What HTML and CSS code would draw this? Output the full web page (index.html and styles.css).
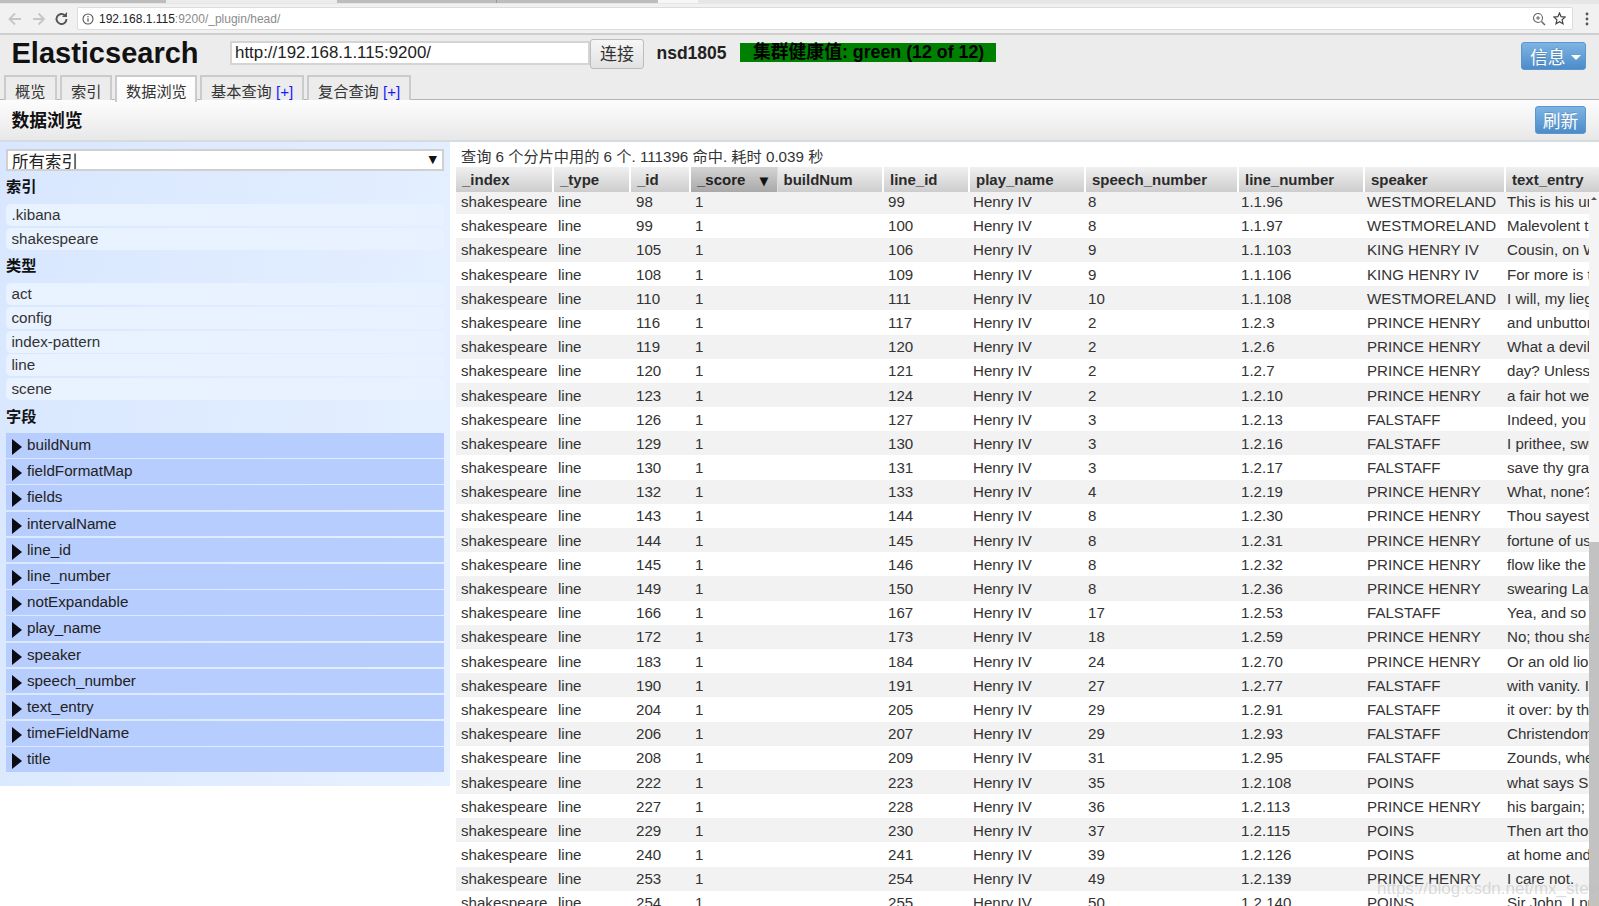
FILE: index.html
```html
<!DOCTYPE html>
<html lang="zh">
<head>
<meta charset="utf-8">
<title>Elasticsearch</title>
<link rel="stylesheet" href="styles.css">
</head>
<body>
<div class="chrome">
  <div class="strip">
    <span class="st st-a"></span><span class="st st-b"></span><span class="st st-c"></span><span class="st st-c st-d"></span><span class="st st-e"></span>
  </div>
  <div class="toolbar">
    <svg class="nav" width="72" height="20" viewBox="0 0 72 20">
      <path d="M20 10H9M14 4.5L8.5 10l5.5 5.5" fill="none" stroke="#c6c6c6" stroke-width="1.8"/>
      <path d="M32 10h11M37.500 4.500L43 10l-5.500 5.500" fill="none" stroke="#c6c6c6" stroke-width="1.800"/>
      <path d="M65.500 10a5 5 0 1 1-1.500-3.600" fill="none" stroke="#555" stroke-width="1.900"/>
      <path d="M66 3v5h-5z" fill="#555"/>
    </svg>
    <div class="address">
      <svg class="addr-i" width="12" height="12" viewBox="0 0 12 12"><circle cx="6" cy="6" r="5" fill="none" stroke="#555" stroke-width="1.100"/><path d="M6 5.200v3.600M6 3v1.300" stroke="#555" stroke-width="1.200"/></svg>
      <span class="host">192.168.1.115</span><span class="path">:9200/_plugin/head/</span>
      <span class="grow"></span>
      <svg width="14" height="14" viewBox="0 0 14 14"><circle cx="6" cy="6" r="4.500" fill="none" stroke="#666" stroke-width="1.100"/><path d="M9.500 9.500L13 13" stroke="#666" stroke-width="1.500"/><path d="M4 6h4M6 4v4" stroke="#666"/></svg>
      <svg class="star" width="13" height="13" viewBox="0 0 13 13"><path d="M6.500 1l1.600 3.700 4 .4-3 2.700.9 4-3.500-2.100L3 11.800l.9-4-3-2.700 4-.4z" fill="none" stroke="#444" stroke-width="1.200"/></svg>
    </div>
    <svg class="menu" width="4" height="14" viewBox="0 0 4 14"><circle cx="2" cy="2" r="1.400" fill="#555"/><circle cx="2" cy="7" r="1.400" fill="#555"/><circle cx="2" cy="12" r="1.400" fill="#555"/></svg>
  </div>
</div>

<header class="head">
  <div class="head-top">
    <h1 class="brand">Elasticsearch</h1>
    <input class="url" type="text" value="http://192.168.1.115:9200/">
    <button class="connect" type="button">连接</button>
    <span class="cluster">nsd1805</span>
    <span class="health">集群健康值: green (12 of 12)</span>
    <span class="grow"></span>
    <button class="blue info" type="button">信息<i class="caret"></i></button>
  </div>
  <nav class="tabs">
    <a class="tab t1">概览</a>
    <a class="tab t2">索引</a>
    <a class="tab t3 active">数据浏览</a>
    <a class="tab t4">基本查询 <b>[+]</b></a>
    <a class="tab t5">复合查询 <b>[+]</b></a>
  </nav>
</header>

<div class="section">
  <h2>数据浏览</h2>
  <button class="blue refresh" type="button">刷新</button>
</div>

<main class="content">
  <aside class="side-wrap">
    <div class="side">
      <div class="select">所有索引<span class="sel-arrow">▼</span></div>
      <h3 class="h-a">索引</h3>
      <ul class="items">
        <li>.kibana</li>
        <li>shakespeare</li>
      </ul>
      <h3 class="h-b">类型</h3>
      <ul class="items">
        <li>act</li>
        <li>config</li>
        <li>index-pattern</li>
        <li>line</li>
        <li>scene</li>
      </ul>
      <h3 class="h-c">字段</h3>
      <ul class="fields">
        <li>buildNum</li>
        <li>fieldFormatMap</li>
        <li>fields</li>
        <li>intervalName</li>
        <li>line_id</li>
        <li>line_number</li>
        <li>notExpandable</li>
        <li>play_name</li>
        <li>speaker</li>
        <li>speech_number</li>
        <li>text_entry</li>
        <li>timeFieldName</li>
        <li>title</li>
      </ul>
    </div>
  </aside>

  <section class="results">
    <p class="summary">查询 6 个分片中用的 6 个. 111396 命中. 耗时 0.039 秒</p>
    <table class="thead">
      <colgroup><col class="h1"><col class="h2"><col class="h3"><col class="h4"><col class="h5"><col class="h6"><col class="h7"><col class="h8"><col class="h9"><col class="h10"><col class="h11"></colgroup>
      <tr>
        <th>_index</th><th>_type</th><th>_id</th><th class="sorted">_score<span class="sort">▼</span></th><th>buildNum</th><th>line_id</th><th>play_name</th><th>speech_number</th><th>line_number</th><th>speaker</th><th>text_entry</th>
      </tr>
    </table>
    <div class="body-wrap">
      <div class="rows">
        <table class="tbody">
          <colgroup><col class="c1"><col class="c2"><col class="c3"><col class="c4"><col class="c5"><col class="c6"><col class="c7"><col class="c8"><col class="c9"><col class="c10"><col class="c11"></colgroup>
          <tbody>
<tr><td>shakespeare</td><td>line</td><td>98</td><td>1</td><td></td><td>99</td><td>Henry IV</td><td>8</td><td>1.1.96</td><td>WESTMORELAND</td><td>This is his uncles teaching; this is Worcester,</td></tr>
<tr><td>shakespeare</td><td>line</td><td>99</td><td>1</td><td></td><td>100</td><td>Henry IV</td><td>8</td><td>1.1.97</td><td>WESTMORELAND</td><td>Malevolent to you in all aspects;</td></tr>
<tr><td>shakespeare</td><td>line</td><td>105</td><td>1</td><td></td><td>106</td><td>Henry IV</td><td>9</td><td>1.1.103</td><td>KING HENRY IV</td><td>Cousin, on Wednesday next our council we</td></tr>
<tr><td>shakespeare</td><td>line</td><td>108</td><td>1</td><td></td><td>109</td><td>Henry IV</td><td>9</td><td>1.1.106</td><td>KING HENRY IV</td><td>For more is to be said and to be done</td></tr>
<tr><td>shakespeare</td><td>line</td><td>110</td><td>1</td><td></td><td>111</td><td>Henry IV</td><td>10</td><td>1.1.108</td><td>WESTMORELAND</td><td>I will, my liege.</td></tr>
<tr><td>shakespeare</td><td>line</td><td>116</td><td>1</td><td></td><td>117</td><td>Henry IV</td><td>2</td><td>1.2.3</td><td>PRINCE HENRY</td><td>and unbuttoning thee after supper and sleeping upon</td></tr>
<tr><td>shakespeare</td><td>line</td><td>119</td><td>1</td><td></td><td>120</td><td>Henry IV</td><td>2</td><td>1.2.6</td><td>PRINCE HENRY</td><td>What a devil hast thou to do with the time of the</td></tr>
<tr><td>shakespeare</td><td>line</td><td>120</td><td>1</td><td></td><td>121</td><td>Henry IV</td><td>2</td><td>1.2.7</td><td>PRINCE HENRY</td><td>day? Unless hours were cups of sack and minutes</td></tr>
<tr><td>shakespeare</td><td>line</td><td>123</td><td>1</td><td></td><td>124</td><td>Henry IV</td><td>2</td><td>1.2.10</td><td>PRINCE HENRY</td><td>a fair hot wench in flame-coloured taffeta, I see no</td></tr>
<tr><td>shakespeare</td><td>line</td><td>126</td><td>1</td><td></td><td>127</td><td>Henry IV</td><td>3</td><td>1.2.13</td><td>FALSTAFF</td><td>Indeed, you come near me now, Hal; for we that take</td></tr>
<tr><td>shakespeare</td><td>line</td><td>129</td><td>1</td><td></td><td>130</td><td>Henry IV</td><td>3</td><td>1.2.16</td><td>FALSTAFF</td><td>I prithee, sweet wag, shall there be gallows</td></tr>
<tr><td>shakespeare</td><td>line</td><td>130</td><td>1</td><td></td><td>131</td><td>Henry IV</td><td>3</td><td>1.2.17</td><td>FALSTAFF</td><td>save thy grace,--majesty I should say, for grace</td></tr>
<tr><td>shakespeare</td><td>line</td><td>132</td><td>1</td><td></td><td>133</td><td>Henry IV</td><td>4</td><td>1.2.19</td><td>PRINCE HENRY</td><td>What, none?</td></tr>
<tr><td>shakespeare</td><td>line</td><td>143</td><td>1</td><td></td><td>144</td><td>Henry IV</td><td>8</td><td>1.2.30</td><td>PRINCE HENRY</td><td>Thou sayest well, and it holds well too; for the</td></tr>
<tr><td>shakespeare</td><td>line</td><td>144</td><td>1</td><td></td><td>145</td><td>Henry IV</td><td>8</td><td>1.2.31</td><td>PRINCE HENRY</td><td>fortune of us that are the moons men doth ebb and</td></tr>
<tr><td>shakespeare</td><td>line</td><td>145</td><td>1</td><td></td><td>146</td><td>Henry IV</td><td>8</td><td>1.2.32</td><td>PRINCE HENRY</td><td>flow like the sea, being governed, as the sea is,</td></tr>
<tr><td>shakespeare</td><td>line</td><td>149</td><td>1</td><td></td><td>150</td><td>Henry IV</td><td>8</td><td>1.2.36</td><td>PRINCE HENRY</td><td>swearing Lay by and spent with crying Bring in;</td></tr>
<tr><td>shakespeare</td><td>line</td><td>166</td><td>1</td><td></td><td>167</td><td>Henry IV</td><td>17</td><td>1.2.53</td><td>FALSTAFF</td><td>Yea, and so used it that were it not here apparent</td></tr>
<tr><td>shakespeare</td><td>line</td><td>172</td><td>1</td><td></td><td>173</td><td>Henry IV</td><td>18</td><td>1.2.59</td><td>PRINCE HENRY</td><td>No; thou shalt.</td></tr>
<tr><td>shakespeare</td><td>line</td><td>183</td><td>1</td><td></td><td>184</td><td>Henry IV</td><td>24</td><td>1.2.70</td><td>PRINCE HENRY</td><td>Or an old lion, or a lovers lute.</td></tr>
<tr><td>shakespeare</td><td>line</td><td>190</td><td>1</td><td></td><td>191</td><td>Henry IV</td><td>27</td><td>1.2.77</td><td>FALSTAFF</td><td>with vanity. I would to God thou and I knew where</td></tr>
<tr><td>shakespeare</td><td>line</td><td>204</td><td>1</td><td></td><td>205</td><td>Henry IV</td><td>29</td><td>1.2.91</td><td>FALSTAFF</td><td>it over: by the Lord, and I do not, I am a villain:</td></tr>
<tr><td>shakespeare</td><td>line</td><td>206</td><td>1</td><td></td><td>207</td><td>Henry IV</td><td>29</td><td>1.2.93</td><td>FALSTAFF</td><td>Christendom.</td></tr>
<tr><td>shakespeare</td><td>line</td><td>208</td><td>1</td><td></td><td>209</td><td>Henry IV</td><td>31</td><td>1.2.95</td><td>FALSTAFF</td><td>Zounds, where thou wilt, lad; Ill make one; an</td></tr>
<tr><td>shakespeare</td><td>line</td><td>222</td><td>1</td><td></td><td>223</td><td>Henry IV</td><td>35</td><td>1.2.108</td><td>POINS</td><td>what says Sir John Sack and Sugar? Jack! how</td></tr>
<tr><td>shakespeare</td><td>line</td><td>227</td><td>1</td><td></td><td>228</td><td>Henry IV</td><td>36</td><td>1.2.113</td><td>PRINCE HENRY</td><td>his bargain; for he was never yet a breaker of</td></tr>
<tr><td>shakespeare</td><td>line</td><td>229</td><td>1</td><td></td><td>230</td><td>Henry IV</td><td>37</td><td>1.2.115</td><td>POINS</td><td>Then art thou damned for keeping thy word with the devil.</td></tr>
<tr><td>shakespeare</td><td>line</td><td>240</td><td>1</td><td></td><td>241</td><td>Henry IV</td><td>39</td><td>1.2.126</td><td>POINS</td><td>at home and be hanged.</td></tr>
<tr><td>shakespeare</td><td>line</td><td>253</td><td>1</td><td></td><td>254</td><td>Henry IV</td><td>49</td><td>1.2.139</td><td>PRINCE HENRY</td><td>I care not.</td></tr>
<tr><td>shakespeare</td><td>line</td><td>254</td><td>1</td><td></td><td>255</td><td>Henry IV</td><td>50</td><td>1.2.140</td><td>POINS</td><td>Sir John, I prithee, leave the prince and me alone:</td></tr>
          </tbody>
        </table>
      </div>
      <div class="scrollbar">
        <span class="sb-up"></span>
        <span class="sb-thumb"></span>
      </div>
    </div>
  </section>
</main>
<div class="watermark">https://blog.csdn.net/mx_steve</div>
</body>
</html>
```

FILE: styles.css
```css
* { box-sizing: border-box; }
html, body { margin: 0; height: 906px; overflow: hidden; }
body {
  display: flex;
  flex-direction: column;
  background: #fff;
  color: #2b2b2b;
  font: 15.2px "Liberation Sans", "Noto Sans CJK SC", sans-serif;
}
button, input { font-family: inherit; }
h1, h2, h3, p, ul { margin: 0; padding: 0; }
ul { list-style: none; }
.grow { flex: 1; }

/* browser chrome */
.chrome { flex: none; height: 35px; background: #f1f1f1; border-bottom: 2px solid #cfcfcf; }
.strip { display: flex; height: 4px; background: #e6e6e6; }
.st { height: 3px; }
.st-a { width: 166px; background: #bdbdbd; }
.st-b { width: 171px; background: #ececec; }
.st-c { width: 160px; background: #bdbdbd; border-right: 1px solid #999; }
.st-d { width: 161px; border-right: 0; }
.st-e { width: 40px; background: #f7f7f7; }
.toolbar { display: flex; align-items: center; height: 29px; padding: 0 9px 0 1px; }
.nav { flex: none; }
.address {
  flex: none;
  display: flex;
  align-items: center;
  width: 1496px;
  height: 23px;
  margin-left: 4px;
  padding: 0 6px 0 4px;
  background: #fff;
  border: 1px solid #dcdcdc;
  border-radius: 2px;
  font-size: 12px;
}
.addr-i { margin-right: 5px; }
.host { color: #222; }
.path { color: #8c8c8c; }
.star { margin-left: 7px; }
.menu { margin-left: 12px; }

/* app header */
.head { flex: none; height: 65px; background: #ececec; border-bottom: 1px solid #b5b5b5; }
.head-top { display: flex; align-items: flex-start; height: 40px; padding-right: 13px; }
.brand { width: 230px; padding: 0 0 0 11.500px; font: bold 29px/36px "Liberation Sans", sans-serif; color: #111; }
.url {
  width: 360px;
  height: 24px;
  margin-top: 6px;
  padding: 0 3px;
  background: #fff;
  border: 2px solid #d4d4d4;
  font-size: 16.900px;
  color: #222;
}
.connect {
  width: 54px;
  height: 30px;
  margin-top: 4px;
  padding: 0 0 3px;
  background: linear-gradient(#f6f6f6, #e2e2e2);
  border: 1px solid #bcbcbc;
  border-radius: 3px;
  font-size: 16.900px;
  color: #333;
}
.cluster { margin: 8px 0 0 12.500px; font: bold 17.500px/20px "Liberation Sans", sans-serif; color: #222; width: 83.500px; white-space: nowrap; }
.health {
  height: 19px;
  margin: 8px 0 0 0;
  padding: 0 13px;
  width: 256px;
  background: #008000;
  color: #000;
  font-weight: bold;
  font-size: 17.800px;
  line-height: 19px;
  white-space: nowrap;
}
.blue {
  padding: 0;
  background: linear-gradient(#7db4e4, #4c8cc9);
  border: 1px solid #5d95cf;
  border-radius: 3px;
  color: #fff;
  font-size: 17.800px;
  text-shadow: 0 -1px 0 rgba(0, 0, 0, .15);
}
.info { display: flex; align-items: center; justify-content: flex-start; width: 65px; height: 28px; margin-top: 7px; padding-left: 8px; }
.caret { width: 0; height: 0; margin: 2px 0 0 5px; border: 5px solid transparent; border-top-color: #fff; border-bottom: 0; }

.tabs { display: flex; gap: 3px; height: 25px; padding-left: 4px; }
.tab {
  height: 26px;
  padding: 4px 0 0 9px;
  background: #ececec;
  border: 2px solid #cbcbcb;
  border-bottom: 0;
  color: #333;
  line-height: 21px;
  white-space: nowrap;
}
.tab b { font-weight: normal; color: #1a1aff; }
.tab.active { height: 27px; background: linear-gradient(#fff, #f9f9f9); position: relative; }
.t1 { width: 53px; }
.t2 { width: 52px; }
.t3 { width: 82px; }
.t4 { width: 104px; }
.t5 { width: 104px; }

.section {
  flex: none;
  display: flex;
  align-items: center;
  justify-content: space-between;
  height: 42px;
  padding: 0 13px 0 11.500px;
  background: linear-gradient(#fdfdfd, #e8e8e8);
  border-bottom: 2px solid #d6dbe0;
}
.section h2 { padding-bottom: 2px; font-size: 17.800px; font-weight: bold; color: #111; }
.refresh { width: 51px; height: 28px; }

/* main */
.content { flex: 1; min-height: 0; display: flex; }
.side-wrap { flex: none; width: 456px; }
.side {
  width: 450px;
  height: 644px;
  padding: 7px 6px 0;
  background: linear-gradient(100deg, #d8e7ff, #e6f0ff);
}
.select {
  position: relative;
  height: 22px;
  padding-left: 4px;
  overflow: hidden;
  background: #fff;
  border: 2px solid #d0d0d0;
  font-size: 16.500px;
  line-height: 23px;
  color: #222;
}
.sel-arrow { position: absolute; right: 5px; top: 0; font: 11px/17px "DejaVu Sans", sans-serif; color: #111; }
h3 { font-size: 15.200px; font-weight: bold; color: #111; line-height: 22px; }
.h-a { margin-top: 5px; height: 28px; }
.h-b { margin-top: 5.250px; height: 28px; }
.h-c { margin-top: 6px; height: 27px; }
.items li {
  height: 22px;
  margin-bottom: 1.750px;
  padding-left: 5.500px;
  background: linear-gradient(90deg, #e9f2ff, #e8f1ff);
  border-radius: 5px;
  line-height: 22px;
  color: #333;
}
.fields li {
  position: relative;
  height: 24.600px;
  margin-bottom: 1.600px;
  padding-left: 21px;
  background: #b7cdfd;
  line-height: 24px;
  color: #222;
}
.fields li::before {
  content: "";
  position: absolute;
  left: 6px;
  top: 6px;
  border-left: 10px solid #0b0b14;
  border-top: 8px solid transparent;
  border-bottom: 8px solid transparent;
}

.results { flex: 1; min-width: 0; display: flex; flex-direction: column; }
.summary { flex: none; height: 25px; padding: 4px 0 0 5px; line-height: 22px; color: #333; white-space: nowrap; }
table { border-collapse: collapse; table-layout: fixed; }
.thead { flex: none; width: 1143px; height: 25px; }
th {
  height: 25px;
  padding: 0 0 0 6px;
  background: linear-gradient(#f0f0f0, #cdcdcd);
  border-right: 2px solid #fff;
  text-align: left;
  font-size: 15px;
  font-weight: bold;
  color: #2b2b2b;
  white-space: nowrap;
  overflow: hidden;
}
th:last-child { border-right: 0; }
th.sorted { background: linear-gradient(#d4d4d4, #a9a9a9); color: #222; border-right: 1px solid #ddd; }
.sort { margin-left: 14px; font: 11.500px "DejaVu Sans", sans-serif; color: #111; }
.h1 { width: 97px; }
.h2 { width: 77px; }
.h3 { width: 60px; }
.h4 { width: 87px; }
.h5 { width: 106px; }
.h6 { width: 86px; }
.h7 { width: 116px; }
.h8 { width: 153px; }
.h9 { width: 126px; }
.h10 { width: 141px; }
.h11 { width: 94px; }

.body-wrap { flex: 1; min-height: 0; display: flex; }
.rows { flex: 1; min-width: 0; overflow: hidden; }
.tbody { width: 1133px; margin-top: -2.600px; }
td {
  height: 24.200px;
  padding: 0 0 0 5px;
  font-size: 15.100px;
  white-space: nowrap;
  overflow: hidden;
  color: #333;
}
tr:nth-child(odd) td { background: #f2f2f2; }
.c1 { width: 97px; }
.c2 { width: 78px; }
.c3 { width: 59px; }
.c4 { width: 88px; }
.c5 { width: 105px; }
.c6 { width: 85px; }
.c7 { width: 115px; }
.c8 { width: 153px; }
.c9 { width: 126px; }
.c10 { width: 140px; }
.c11 { width: 87px; }

.scrollbar { flex: none; display: flex; flex-direction: column; width: 10px; background: #f4f4f4; }
.sb-up { align-self: center; width: 0; height: 0; margin-top: 5px; border: 3px solid transparent; border-bottom-color: #555; border-top: 0; }
.sb-thumb { flex: 1; margin-top: 342px; background: #c2c2c2; }

.watermark {
  position: absolute;
  left: 1377px;
  top: 879px;
  font-size: 17px;
  line-height: 20px;
  color: rgba(190, 190, 190, .55);
  white-space: nowrap;
}
```
